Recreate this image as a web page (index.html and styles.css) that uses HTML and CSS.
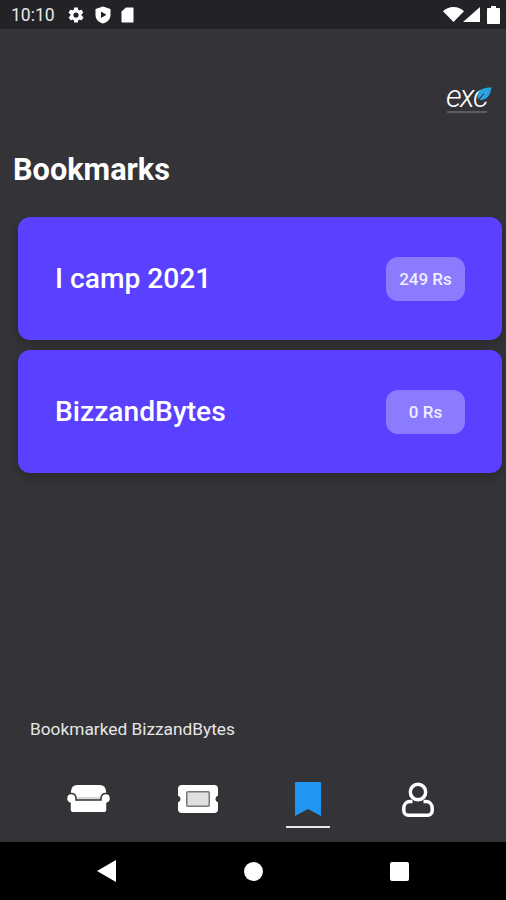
FILE: index.html
```html
<!DOCTYPE html>
<html lang="en">

<head>
  <meta charset="UTF-8">
  <meta name="viewport" content="width=device-width, initial-scale=1.0">
  <title>Bookmarks</title>
  <link rel="stylesheet" href="styles.css">
</head>

<body>
  <!-- Android status bar -->
  <div class="status-bar">
    <div class="status-left">
      <span class="clock">10:10</span>
      <svg class="status-icon" width="18" height="18" viewBox="0 0 24 24">
        <path fill="#fff" fill-rule="evenodd" d="M19.4 13c.1-.3.1-.7.1-1s0-.7-.1-1l2.1-1.6c.2-.2.2-.4.1-.6l-2-3.500c-.1-.2-.4-.3-.6-.2l-2.500 1c-.5-.4-1.100-.7-1.700-1l-.4-2.600c0-.3-.2-.5-.5-.5h-4c-.3 0-.5.2-.5.5l-.4 2.600c-.6.3-1.200.6-1.700 1l-2.500-1c-.2-.1-.5 0-.6.2l-2 3.500c-.1.2-.1.4.1.6L4.600 11c-.1.3-.1.7-.1 1s0 .7.1 1l-2.100 1.600c-.2.2-.2.4-.1.6l2 3.500c.1.2.4.3.6.2l2.500-1c.5.4 1.100.7 1.700 1l.4 2.600c0 .3.2.5.5.5h4c.3 0 .5-.2.5-.5l.4-2.600c.6-.3 1.200-.6 1.700-1l2.500 1c.2.1.5 0 .6-.2l2-3.500c.1-.2.1-.4-.1-.6L19.400 13zM12 15.500a3.500 3.500 0 1 1 0-7 3.500 3.500 0 0 1 0 7z"/>
      </svg>
      <svg class="status-icon" width="16" height="18" viewBox="0 0 16 18">
        <path fill="#fff" fill-rule="evenodd" d="M8 .5 15.500 3v6c0 4.200-3.200 7.400-7.500 8.500C3.700 16.400.5 13.200.5 9V3L8 .5zM6 5.500v6.500l5.500-3.250L6 5.500z"/>
      </svg>
      <svg class="status-icon" width="13" height="16" viewBox="0 0 13 16">
        <path fill="#fff" d="M5 .5h6.500c.6 0 1 .4 1 1v13c0 .6-.4 1-1 1h-10c-.6 0-1-.4-1-1V4.500L5 .5z"/>
      </svg>
    </div>
    <div class="status-right">
      <svg class="wifi" width="21" height="15" viewBox="0 0 21 15">
        <path fill="#fff" d="M10.500 15 0 4.200C2.600 1.700 6.300 0 10.500 0S18.400 1.700 21 4.200L10.500 15z"/>
      </svg>
      <svg class="signal" width="17" height="15" viewBox="0 0 17 15">
        <path fill="#fff" d="M17 0v15H0L17 0z"/>
      </svg>
      <svg class="battery" width="13" height="18" viewBox="0 0 13 18">
        <path fill="#fff" d="M4 0h5v2h3c.6 0 1 .4 1 1v14c0 .6-.4 1-1 1H1c-.6 0-1-.4-1-1V3c0-.6.4-1 1-1h3V0z"/>
      </svg>
    </div>
  </div>

  <main class="content">
    <div class="logo-row">
      <div class="logo">
        <div class="logo-mark">
          <span class="logo-text">exc</span>
          <svg class="logo-leaf" width="16" height="14" viewBox="0 0 16 14">
            <path fill="#29a3e0" d="M15.500.5C9 .5 2.500 2 1.500 8c-.2 1.500 0 3 .5 4.500C5 8.500 8 6 11 5 8 7 5.500 9.500 3.500 13c6 .5 10.500-3 12-12.500z"/>
          </svg>
        </div>
        <div class="logo-caption"></div>
      </div>
    </div>

    <h1 class="page-title">Bookmarks</h1>

    <div class="card-list">
      <div class="card">
        <span class="card-name">I camp 2021</span>
        <span class="price">249 Rs</span>
      </div>
      <div class="card">
        <span class="card-name">BizzandBytes</span>
        <span class="price">0 Rs</span>
      </div>
    </div>

    <p class="snackbar">Bookmarked BizzandBytes</p>
  </main>

  <!-- Bottom tabs -->
  <nav class="tabs">
    <div class="tab">
      <div class="tab-inner">
        <svg width="45" height="28" viewBox="0 0 45 28">
          <path fill="#fff" d="M11 0h23c3.500 0 5.500 2 6 6l.5 6H4.500L5 6c.5-4 2.500-6 6-6z"/>
          <path fill="#d8d8d8" d="M8 12h29v4H8z"/>
          <path fill="#fff" stroke="#333338" stroke-width="1.500" d="M5 8.500c3 0 5 2 5 5V15h25v-1.500c0-3 2-5 5-5s4.500 2.300 4.500 5c0 2.300-1.300 4-3.500 4.700V25c0 1.700-1 2.750-2.700 2.750H6.700C5 27.750 4 26.700 4 25v-6.800C1.800 17.500.5 15.800.5 13.500c0-2.700 1.500-5 4.500-5z"/>
        </svg>
      </div>
    </div>
    <div class="tab">
      <div class="tab-inner">
        <svg width="40" height="28" viewBox="0 0 40 28">
          <path fill="#fff" d="M3.500 0h33C38.500 0 40 1.500 40 3.500v7.200c-1.700.6-2.500 1.800-2.500 3.300s.8 2.700 2.500 3.300v7.200c0 2-1.500 3.500-3.500 3.500h-33C1.500 28 0 26.500 0 24.500v-7.200c1.700-.6 2.500-1.800 2.500-3.300S1.700 11.300 0 10.700V3.500C0 1.500 1.500 0 3.500 0z"/>
          <rect x="8.750" y="6.750" width="22.500" height="14.500" rx="1" fill="#e0e0e0" stroke="#77777c" stroke-width="1.500"/>
        </svg>
      </div>
    </div>
    <div class="tab">
      <div class="tab-inner tab-active">
        <svg width="26" height="34" viewBox="0 0 26 34">
          <path fill="#2196f3" d="M1 0h24c.6 0 1 .4 1 1v33l-13-7L0 34V1c0-.6.4-1 1-1z"/>
        </svg>
      </div>
    </div>
    <div class="tab">
      <div class="tab-inner">
        <svg width="32" height="35" viewBox="0 0 32 35">
          <path fill="none" stroke="#fff" stroke-width="3.500" d="M10.500 19.500H8c-3.500 0-6.200 2.800-6.200 6.500v2.500c0 2.700 1.800 4.700 4.500 4.700h19.400c2.700 0 4.500-2 4.500-4.700V26c0-3.700-2.700-6.500-6.200-6.500h-2.500"/>
          <circle cx="16" cy="10" r="7.700" fill="#333338" stroke="#fff" stroke-width="3.500"/>
        </svg>
      </div>
    </div>
  </nav>

  <!-- Android navigation bar -->
  <div class="nav-bar">
    <svg width="19" height="22" viewBox="0 0 19 22">
      <path fill="#fff" d="M19 0v22L0 11 19 0z"/>
    </svg>
    <span class="nav-circle"></span>
    <span class="nav-square"></span>
  </div>
</body>

</html>
```

FILE: styles.css
```css
* {
  box-sizing: border-box;
}

body {
  font-family: Roboto, "Liberation Sans", sans-serif;
  background-color: #333338;
  color: #fff;
  margin: 0;
  width: 506px;
  height: 900px;
  display: flex;
  flex-direction: column;
  overflow: hidden;
}

/* status bar */
.status-bar {
  height: 29px;
  background-color: #232327;
  padding: 0 6px 0 11px;
  display: flex;
  align-items: center;
  justify-content: space-between;
}

.status-left {
  display: flex;
  align-items: center;
}

.clock {
  font-size: 17.5px;
  color: #e8e8e8;
  width: 56px;
}

.status-icon {
  margin-right: 10px;
}

.status-right {
  display: flex;
  align-items: center;
}

.signal {
  margin-left: -1px;
}

.battery {
  margin-left: 7px;
}

/* page */
.content {
  flex: 1;
  display: flex;
  flex-direction: column;
  padding-top: 57px;
}

.logo-row {
  display: flex;
  justify-content: flex-end;
  padding-right: 14px;
  height: 28px;
}

.logo {
  width: 46px;
}

.logo-mark {
  position: relative;
  height: 24px;
}

.logo-text {
  display: block;
  font-size: 31px;
  font-weight: 300;
  font-style: italic;
  line-height: 22px;
  letter-spacing: -1.5px;
}

.logo-leaf {
  position: absolute;
  top: 1px;
  right: 0;
}

.logo-caption {
  height: 2px;
  margin: 1px 5px 0 1px;
  background-color: #5c5c63;
}

.page-title {
  font-size: 30.7px;
  font-weight: 700;
  line-height: 34px;
  margin: 39px 0 0 13px;
}

.card-list {
  display: flex;
  flex-direction: column;
  gap: 10px;
  margin: 30px 4px 0 18px;
}

.card {
  height: 123px;
  background-color: #5a40ff;
  border-radius: 12px;
  padding: 0 37px;
  display: flex;
  align-items: center;
  justify-content: space-between;
  box-shadow: 0 4px 10px rgba(0, 0, 0, 0.2);
}

.card-name {
  font-size: 28.2px;
  font-weight: 500;
}

.price {
  width: 79px;
  height: 44px;
  background-color: #8b7bff;
  border-radius: 12px;
  font-size: 17px;
  font-weight: 500;
  display: flex;
  align-items: center;
  justify-content: center;
  color: #f0eeff;
}

.snackbar {
  font-size: 17.3px;
  color: #e6e6e6;
  line-height: 20px;
  margin: auto 0 0 30px;
  padding-bottom: 13px;
}

/* bottom tabs */
.tabs {
  height: 90px;
  padding: 26px 0 0 33px;
  display: flex;
}

.tab {
  width: 110px;
  display: flex;
  justify-content: center;
}

.tab-inner {
  width: 44px;
  height: 50px;
  padding-bottom: 6px;
  border-bottom: 2px solid transparent;
  display: flex;
  align-items: center;
  justify-content: center;
}

.tab-inner svg {
  flex-shrink: 0;
}

.tab-active {
  border-bottom-color: #e8e8e8;
}

/* android nav bar */
.nav-bar {
  height: 58px;
  background-color: #000;
  padding: 0 97px;
  display: flex;
  align-items: center;
  justify-content: space-between;
}

.nav-circle {
  width: 19px;
  height: 19px;
  border-radius: 50%;
  background-color: #fff;
}

.nav-square {
  width: 19px;
  height: 19px;
  border-radius: 2px;
  background-color: #fff;
}
```
